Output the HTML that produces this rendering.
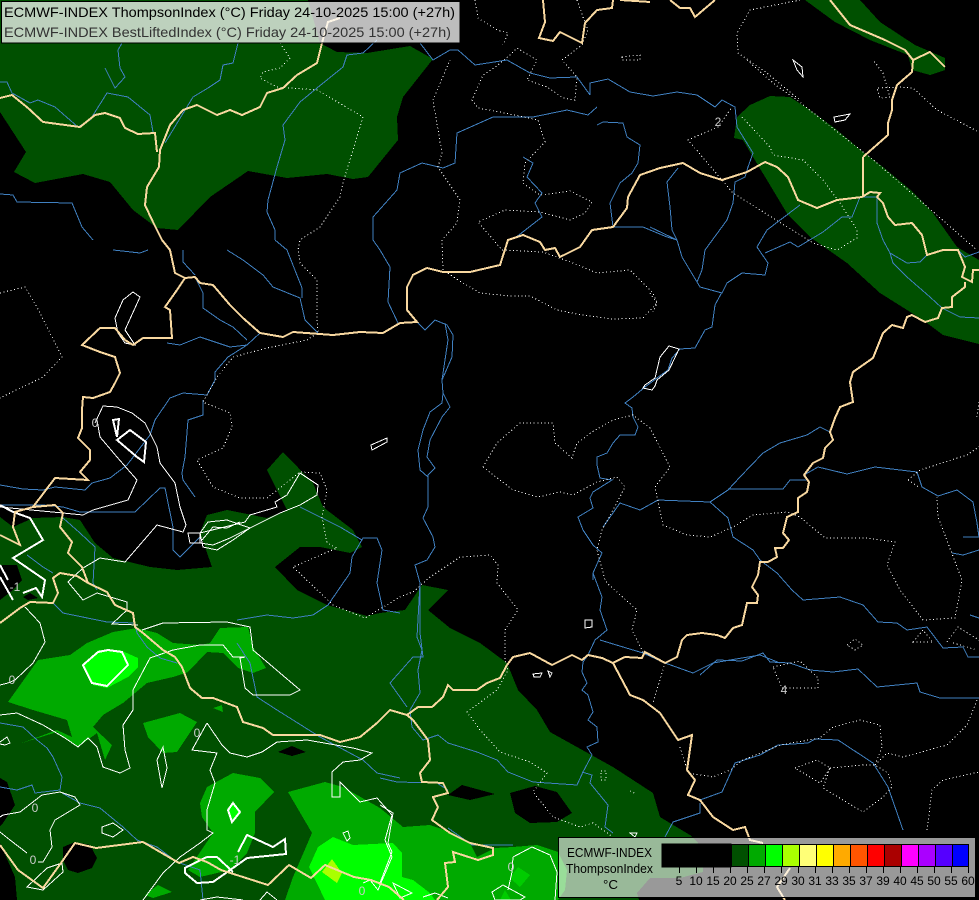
<!DOCTYPE html>
<html lang="en">
<head>
<meta charset="utf-8">
<title>ECMWF-INDEX ThompsonIndex</title>
<style>
html,body{margin:0;padding:0;background:#000;width:979px;height:900px;overflow:hidden}
svg{display:block;position:absolute;left:0;top:0}
text{font-family:"Liberation Sans",sans-serif}
</style>
</head>
<body>
<svg width="979" height="900" viewBox="0 0 979 900" xmlns="http://www.w3.org/2000/svg" shape-rendering="crispEdges">
<rect width="979" height="900" fill="#000"/>

<!-- dark green fills -->
<g fill="#005000">
<polygon points="0,0 308,0 320,43 337,52 367,53 410,46 433,59 403,97 397,117 398,140 368,177 353,179 327,174 287,178 248,171 210,197 178,230 157,228 133,210 110,182 83,174 35,183 14,172 26,152 0,112"/>
<polygon points="734,138 737,117 750,105 770,96 790,97 810,110 837,130 863,152 883,167 913,192 933,213 957,247 979,260 979,344 943,335 923,320 880,293 847,263 810,237 788,215 773,190 753,157 743,140"/>
<polygon points="805,0 860,0 880,22 915,45 945,58 945,70 930,75 912,70 908,55 870,40 835,22"/>
<polygon points="0,517 13,527 33,518 63,517 80,520 95,543 113,558 150,567 177,570 212,567 200,533 207,515 227,510 267,518 287,510 267,470 283,452 313,483 323,507 353,530 362,547 350,553 320,547 300,547 275,567 297,590 327,605 367,616 380,613 405,610 422,585 448,590 428,610 450,628 480,643 507,663 518,690 537,710 550,732 577,747 613,767 653,793 660,817 690,835 698,843 703,863 703,872 680,878 650,878 637,893 639,900 0,900"/>
</g>

<!-- black holes -->
<g fill="#000">
<polygon points="0,565 17,565 22,580 13,590 0,600"/>
<polygon points="23,597 30,593 38,598 28,600"/>
<polygon points="0,778 7,782 15,805 3,823 0,826"/>
<polygon points="0,843 15,877 17,900 0,900"/>
<polygon points="63,847 75,842 90,845 97,858 92,868 78,873 68,870 63,860"/>
<polygon points="278,752 292,746 306,752 292,756"/>
<polygon points="448,795 462,785 495,794 470,800"/>
<polygon points="510,793 535,786 557,792 572,813 557,822 530,823 515,813"/>
</g>

<!-- mid green fills -->
<g fill="#00aa00">
<polygon points="8,702 38,660 70,655 87,643 113,632 137,628 157,633 173,643 200,645 210,643 220,628 248,627 253,647 266,668 253,673 238,668 223,653 207,652 188,672 173,677 147,683 123,703 103,715 93,727 112,745 105,760 97,733 78,747 57,732 22,743 57,730 72,737 67,720 33,710"/>
<polygon points="143,723 180,713 197,722 177,752 163,753 148,737"/>
<polygon points="213,708 222,705 223,712"/>
<polygon points="200,803 207,787 233,773 260,778 274,792 255,812 255,833 247,853 230,870 200,877 188,870 213,833 202,817"/>
<polygon points="145,895 158,885 172,892 153,898"/>
<polygon points="288,792 325,782 343,787 380,808 403,827 430,825 453,833 470,843 477,857 495,848 513,847 537,845 558,852 567,870 565,890 558,900 285,900 293,877 312,833"/>
</g>

<!-- bright fills -->
<g fill="#00ff00">
<polygon points="83,665 98,650 120,650 138,658 138,667 128,677 107,688 93,685"/>
<polygon points="227,810 232,803 240,812 232,822"/>
<polygon points="318,847 333,837 353,845 393,843 402,853 402,877 413,880 430,893 435,900 325,900 309,867"/>
</g>
<g fill="#00cc00">
<polygon points="510,878 518,867 530,875 520,887"/>
<polygon points="500,900 505,890 511,900"/>
</g>
<polygon points="322,872 332,859 342,873 337,883" fill="#aaff00"/>

<!-- rivers -->
<g fill="none" stroke="#4080c0" stroke-width="1">
<polyline points="420,43 433,60 450,50 458,50 475,65 507,60 530,73 550,78 577,77 590,95"/>
<polyline points="590,95 590,83 608,79 630,92 653,96 677,92 697,95 715,107 722,100 735,107 737,127 753,153 748,167 745,177 735,182 733,203 727,220 705,250 702,270 697,282 700,287 722,293 727,283 742,273 765,275 768,263 757,247 767,230 800,205"/>
<polyline points="597,125 603,122 623,123 627,137 640,145 638,163 632,173 620,183 610,203 613,227 643,227 667,237 677,240 682,257 697,282"/>
<polyline points="667,182 678,168 667,182 670,207 672,230 677,240"/>
<polyline points="597,107 588,115 567,110 533,117 493,117 457,133 455,163 443,168 422,163 400,173 397,190 373,217 373,240 380,250 390,267 388,302 398,323"/>
<polyline points="523,157 533,163 527,177 542,193 535,203 542,217 515,238"/>
<polyline points="650,227 677,240"/>
<polyline points="765,253 790,242 798,247 823,232 842,217 852,217 860,197 877,197 877,223 883,240 890,253 907,263 920,262 927,255"/>
<polyline points="890,253 893,263 907,277 930,297 942,308 960,317 979,318"/>
<polyline points="958,250 965,257 979,252"/>
<polyline points="722,292 715,305 712,327 705,330 695,348 680,349 672,358 668,370 657,378 645,387 633,397 625,403 632,408 633,417 638,427 635,435 620,435 613,443 607,453 597,457 597,465 600,478 612,480 593,492 590,498 593,508 578,517 583,530 593,545 602,553 593,573 593,580"/>
<polyline points="603,527 620,503 640,510 658,500 710,502 728,490 740,477 763,453 780,443 807,435 820,427 830,432"/>
<polyline points="728,489 783,489 790,480 807,480"/>
<polyline points="710,502 728,518 733,537 753,550 760,560 777,573 792,590 803,600 840,597 863,605 878,622 897,623 907,630 927,627 943,648 963,647 968,657 979,657"/>
<polyline points="804,475 818,467 847,474 875,467 917,472 922,487 938,496 957,490 973,502 977,523 979,537 963,537"/>
<polyline points="952,553 963,555 979,550"/>
<polyline points="970,615 979,618"/>
<polyline points="700,675 717,660 742,661 763,653 770,662 790,663 810,670 833,672 858,669 877,687 917,683 920,692 940,698 979,698"/>
<polyline points="700,800 722,792 735,763 760,755 778,745 808,743 815,739 838,740 873,763 888,787 903,830"/>
<polyline points="417,322 425,330 435,320 447,325 453,335 452,357 442,380 443,393 450,407 442,417 430,440 427,457 435,468 428,475 428,507 423,518 433,537 435,547 427,560 415,565 420,583 420,633 423,657 413,657 390,683 407,707"/>
<polyline points="445,323 448,340 445,360 442,380 443,393 442,403 430,412 423,430 418,450 420,470 428,477"/>
<polyline points="420,583 417,637 422,650 418,670 420,693 410,710 412,727 423,740 438,735 448,743 477,752 497,760 508,772 533,782 577,785 583,772 592,755 587,747 598,742 597,727 588,720 593,712 588,695 582,690 587,683 582,672 583,662 588,655 595,640 607,630 600,610 602,597 593,573"/>
<polyline points="582,772 592,775 590,783 608,805 605,827 613,833"/>
<polyline points="380,778 397,782 437,783 448,790"/>
<polyline points="448,828 472,845 513,845"/>
<polyline points="600,640 623,647 643,653 665,663 693,673 713,663 730,660 760,655 780,663"/>
<polyline points="700,803 700,813 673,822 665,837"/>
<polyline points="0,485 23,489 43,490 55,487 85,490 92,483 110,478 127,465 150,435 155,420 170,398 183,393 207,395 215,380 215,372 228,357 247,345 260,333"/>
<polyline points="167,343 180,345 200,337 230,347 247,345"/>
<polyline points="203,400 203,415 188,420 185,457 182,473 183,480 195,497"/>
<polyline points="195,277 203,293 203,308 220,320 233,327 247,340"/>
<polyline points="183,250 183,262 195,275"/>
<polyline points="227,250 243,260 263,275 273,287 300,298 305,320 318,333"/>
<polyline points="275,240 287,250 302,288 302,298"/>
<polyline points="113,250 140,253 148,250"/>
<polyline points="0,82 7,82 12,93 30,103 38,100 55,107 78,127 90,120 107,93 128,97 150,115 153,132"/>
<polyline points="105,68 115,88 125,77 120,68 118,50 122,43"/>
<polyline points="165,143 193,97 208,88 220,80 223,65 233,63 238,43"/>
<polyline points="377,40 363,53 347,55 343,67 317,88 300,102 283,125 285,140 277,167 268,200 267,212 275,230 275,240"/>
<polyline points="0,194 13,195 17,202 72,203 82,227 93,240"/>
<polyline points="0,723 23,727 37,740 47,748 53,757 62,777 60,790 35,793 32,785 17,790 0,787"/>
<polyline points="62,793 80,803 100,808 123,827 137,840 157,847 177,862 200,870 203,900"/>
<polyline points="0,505 43,505 63,507 80,512 135,512 160,488 165,488 173,527 173,550 180,557 192,545 200,537"/>
<polyline points="63,518 80,533 95,547 93,583 97,590"/>
<polyline points="27,555 43,567 53,573"/>
<polyline points="53,603 63,613 107,622 135,623 137,633 147,647 160,658 177,663"/>
<polyline points="237,643 250,663 257,697 277,710 293,720 320,737 363,760 377,773 400,778"/>
<polyline points="237,620 267,615 293,618 313,615 328,605 350,573 352,557 363,538 377,538 382,550 377,583 383,610 400,613"/>
<polyline points="300,507 340,527 362,540"/>
</g>

<!-- thin white contours -->
<g fill="none" stroke="#fff" stroke-width="1">
<polyline points="95,423 103,406 117,407 132,413 145,423 157,447 160,463 175,483 180,507 186,525 183,532 157,525 125,562 100,558 83,568 68,582 83,600 97,593 127,602 127,610 112,624 138,625"/>
<polyline points="97,420 100,437 117,457 137,480 128,500 93,510 83,515 63,513 0,507"/>
<polygon points="133,292 140,297 125,330 135,345 125,343 118,333 115,318 123,300"/>
<polygon points="371,445 387,438 387,442 372,450"/>
<polygon points="188,533 200,533 200,543 190,543"/>
<polygon points="200,533 245,522 250,515 277,507 275,502 287,495 300,473 318,485 317,495 300,505 280,513 250,528 233,540 217,550 203,547"/>
<polyline points="200,533 208,522 227,520 250,528 230,538 213,545 200,543"/>
<polyline points="202,540 213,527 227,528 240,522"/>
<polyline points="142,630 163,623 227,622 250,627 253,650 300,690 290,695 253,695 245,688 240,658 245,657 233,657 223,645 200,645 173,650 150,658 133,690 133,710 123,725 125,750 130,768 120,773 103,767 97,747 88,738 78,747 65,738 43,725 17,713 0,715"/>
<polyline points="0,685 8,683 15,680 33,663 45,642 40,623 25,607"/>
<polyline points="207,723 192,750 217,753 210,770 215,783 207,810 207,830 213,833 200,843 180,857 163,873 143,900"/>
<polyline points="207,723 222,745 230,753 247,757 262,752 277,742 307,740 353,748 372,753 360,760 343,762 332,772 332,797 340,797 340,782 360,802 377,798 392,815 385,840 392,857 378,890 370,880 363,883"/>
<polyline points="0,817 3,815 20,812 42,795 60,792 75,797 80,805 55,820 50,830 52,847 43,862 38,862"/>
<polyline points="0,832 10,840 27,853"/>
<polygon points="27,887 47,868 62,863 63,872 43,890"/>
<polygon points="102,827 113,823 123,830 113,837 102,833"/>
<polygon points="163,747 157,760 162,788 167,768"/>
<polyline points="0,742 7,737 10,743 5,745 0,744"/>
<polygon points="343,833 348,831 350,838 347,841"/>
<polyline points="380,805 393,813 388,843 392,852 380,883"/>
<polyline points="513,857 532,847 550,855 557,872 555,900"/>
<polyline points="513,857 512,872 508,890"/>
<polygon points="492,892 503,885 525,897 520,900 495,900"/>
<polygon points="393,883 412,893 400,898"/>
<polyline points="423,897 435,893 448,898"/>
<polyline points="260,900 267,892 277,900"/>
<polyline points="200,900 217,897 243,900"/>
<polygon points="793,60 802,67 803,77 797,70"/>
<polygon points="834,117 850,114 845,120 835,122"/>
<polygon points="669,346 679,349 669,370 657,380 655,386 652,390 643,388 645,385 655,378 660,357"/>
<polygon points="585,620 592,620 592,627 585,628"/>
<polygon points="533,674 542,673 540,677 534,677"/>
<polygon points="548,671 552,673 550,677"/>
<polygon points="630,833 637,833 635,837"/>
</g>

<!-- thick white contours -->
<g fill="none" stroke="#fff" stroke-width="2">
<polyline points="0,505 13,512 30,518 43,540 13,558 45,580 42,597 36,588 23,593"/>
<polyline points="0,565 8,580"/>
<polyline points="0,577 13,600"/>
<polygon points="113,420 119,419 117,437"/>
<polygon points="117,440 130,430 146,442 144,462 137,457"/>
<polygon points="83,665 98,652 108,650 122,652 128,665 107,686 92,683"/>
<polygon points="233,803 240,812 232,822 228,810"/>
<polyline points="238,852 247,835 273,847 285,839 286,854 247,858 233,868 213,882 197,883 185,873 185,868 207,857 217,857 233,872"/>
</g>

<!-- dotted contours -->
<g fill="none" stroke="#fff" stroke-width="1" stroke-dasharray="1 2.6">
<polyline points="280,43 290,58 280,68 263,72 260,78 277,87 317,90 363,117 353,150 343,183 340,197 320,227 300,240 298,250 300,263 317,280 317,317 318,333 307,340 267,348 233,357 217,377 203,402 230,413 232,427 223,448 197,460 213,487 240,498 267,498 300,472 320,473 327,490 322,517 327,543 337,548 293,567 333,605 365,618 400,597 413,592 430,577 460,557 490,555 498,565 497,583 518,610 505,630 505,660 508,670 497,690 467,712 480,730 500,752 530,762 547,773 533,792 553,817 580,827 593,823 613,837"/>
<polyline points="0,293 25,287 37,307 62,357 43,377 0,398"/>
<polyline points="475,0 478,18 497,30 508,33 503,45"/>
<polyline points="577,0 583,17 588,30 582,45 562,60 577,77 575,100 563,98 547,87 527,80 537,60 517,48 510,55 498,65 483,75 472,100 478,108 500,112 538,120 545,142 525,163 523,183 540,195 570,191 592,202 585,213 570,220 540,212 505,210 478,222 502,250 543,252 573,263 597,273 630,270 653,293 657,303 643,318 613,319 577,314 557,310 530,296 510,296 480,293 458,280 443,270 442,240 457,223 460,200 438,167 442,153 433,100 450,60"/>
<polygon points="483,467 497,443 520,423 553,423 555,443 572,458 577,443 592,432 613,420 633,415 650,428 670,467 655,487 663,525 687,535 710,537 733,527 753,515 788,512 800,517 825,538 867,538 895,542 887,565 900,590 923,620 955,618 962,580 938,517 937,497 920,470 908,480 920,488" stroke-opacity="0"/>
<polyline points="483,467 497,443 520,423 553,423 555,443 572,458 577,443 592,432 613,420 633,415 650,428 670,467 655,487 663,525 687,535 710,537 733,527 753,515 788,512 800,517 825,538 867,538 895,542 887,565 900,590 923,620 955,618 962,580 938,517 937,497"/>
<polyline points="483,467 513,490 538,497 560,492 573,495 597,482 617,477 625,487 613,510 602,530 597,550 605,580 607,583 637,610 632,630 643,652 665,663 653,703"/>
<polyline points="680,747 688,773 713,777 730,770 743,760 780,745 820,738 833,727 860,720 880,725 882,747 875,765"/>
<polyline points="908,480 920,470 967,455 979,447"/>
<polyline points="908,480 920,488"/>
<polyline points="979,402 977,417"/>
<polygon points="913,642 923,630 933,642"/>
<polyline points="947,642 958,627 979,640"/>
<polyline points="953,643 977,650"/>
<polygon points="773,667 800,661 818,678 818,688 782,688"/>
<polygon points="847,645 855,639 863,645 855,650"/>
<polyline points="875,765 887,753 903,757 947,745 967,725 977,700"/>
<polygon points="795,768 817,760 830,768 820,783"/>
<polyline points="830,768 863,765 875,765 888,773 892,787 883,797 863,812 823,788 830,768"/>
<polyline points="927,830 932,790 943,780 979,772"/>
<polyline points="747,60 773,83 797,100 863,152 870,157 977,250"/>
<polyline points="977,131 937,110 913,88 900,87 877,88 880,98 890,97 883,73 873,60"/>
<polyline points="742,117 770,147 773,155 803,160 823,180 840,203 857,230 857,238 837,250 813,243 733,193 688,140 718,127 732,107"/>
<polyline points="650,293 657,303 653,312"/>
<polyline points="800,0 750,10 737,33 738,53 763,70 800,100"/>
<polygon points="622,57 640,55 640,60 622,60"/>
<polygon points="601,771 606,771 606,780 601,780"/>
<polyline points="630,791 636,794"/>
</g>

<!-- borders -->
<g fill="none" stroke="#f8d8a0" stroke-width="2">
<polyline points="0,98 12,95 28,108 43,122 80,127 95,115 105,113 120,118 125,128 138,134 155,133 157,152"/>
<polyline points="340,18 328,22 322,43 317,63 297,75 283,88 267,93 260,107 242,115 230,110 217,115 197,105 183,110 170,125 160,150 159,167 147,187 145,205 153,222 162,240 170,250 175,273 185,278 195,277 200,283 213,285 230,305 243,318 260,333 283,337 293,332 333,335 360,332 383,333 400,323 417,322 407,310 407,287 413,275 427,268 443,272 470,272 500,265 508,240 523,235 540,242 545,250 555,248 560,257 580,247 592,230 613,227 627,208 628,197 640,175 660,168 683,163 700,173 722,180 747,172 765,162 777,167 788,177 798,200 817,208 837,200 862,197 870,192 880,193 877,197 883,203 888,217 895,225 912,223 922,235 927,255 943,250 958,250 965,267 962,277 972,282 973,270 979,270"/>
<polyline points="965,282 965,287 952,297 952,307 942,308 938,318 925,322 912,315 907,317 903,328 892,325 883,333 873,358 853,372 850,382 853,402 840,407 835,418 830,432 833,440 825,448 823,458 813,463 804,475 809,482 807,492 798,498 798,512 787,517 783,533 789,540 783,548 775,548 777,557 768,562 760,562 758,575 752,587 758,595 757,603 747,603 742,625 733,628 725,638 717,635 702,633 687,635 682,640 677,657 665,663 645,652 642,658 625,657 613,663 602,658 588,655 582,660 572,655 552,665 530,653 513,657 507,665 500,678 487,683 477,690 453,690 448,685 443,697 432,707 418,707 407,715 390,710 377,723 360,737 340,742 320,735 300,735 273,735 263,728 243,722 237,707 213,698 202,698 190,688 182,667 175,657 163,650 143,633 135,627 133,613 115,605 107,592 88,583 82,567 68,553 72,542 60,527 63,513 55,505 33,507 15,512 13,527 20,545 0,535"/>
<polyline points="863,157 863,197"/>
<polyline points="863,157 888,135 888,123 892,110 892,100 897,85 912,72 913,60 905,50 885,40 850,25 830,0"/>
<polyline points="913,60 930,52 945,67"/>
<polyline points="33,507 55,478 88,480 80,472 90,460 90,450 78,438 82,428 82,410 83,397 93,398 110,392 115,383 120,373 115,357 100,352 82,345 100,328 115,328 125,340 133,345 143,338 172,338 170,310 165,307 177,290 185,278"/>
<polyline points="0,623 20,608 30,602 53,603 58,593 53,578 60,573 77,576 88,583"/>
<polyline points="0,845 18,870 43,888 61,863 75,843 96,848 143,842 179,863 193,857 207,862 221,870 268,885 289,865 311,878 325,865 354,877 371,880 389,887 404,900"/>
<polyline points="407,715 413,720 428,740 430,760 420,773 422,782 443,783 448,793 433,797 438,807 432,820 450,833 470,843 493,848 493,855 478,860 453,852 455,862 445,863 448,887 437,900"/>
<polyline points="543,0 545,22 539,38 553,41 560,32 582,43 585,23 597,10 612,8 613,0"/>
<polyline points="620,0 650,2"/>
<polyline points="670,0 680,8 690,8 695,17 715,0"/>
<polyline points="613,663 630,695 643,700 660,713 670,728 678,740 692,735 687,770 695,780 688,795 700,800 713,817 733,830 745,827 750,840 763,843"/>
<polyline points="790,868 777,887 785,900"/>
</g>

<!-- contour labels -->
<g fill="#ccc" font-size="12" text-anchor="middle">
<text x="718" y="126">2</text>
<text x="784" y="694">4</text>
<text x="12" y="684">0</text>
<text x="197" y="737">0</text>
<text x="35" y="812">0</text>
<text x="33" y="864">0</text>
<text x="95" y="427">0</text>
<text x="511" y="871">0</text>
<text x="362" y="895">0</text>
<text x="235" y="864">-1</text>
<text x="15" y="591">-1</text>
</g>

<!-- title overlay -->
<rect x="1.5" y="1.5" width="458.5" height="41.5" fill="#fff" fill-opacity="0.74" stroke="#000" stroke-width="1"/>
<g shape-rendering="auto">
<text x="4" y="17" font-size="14" fill="#000" textLength="451" lengthAdjust="spacingAndGlyphs">ECMWF-INDEX ThompsonIndex (°C) Friday 24-10-2025 15:00 (+27h)</text>
<text x="4" y="37" font-size="14" fill="#333" textLength="447" lengthAdjust="spacingAndGlyphs">ECMWF-INDEX BestLiftedIndex (°C) Friday 24-10-2025 15:00 (+27h)</text>
</g>

<!-- legend -->
<rect x="558.5" y="837.5" width="417" height="60" fill="#fff" fill-opacity="0.6" stroke="#000" stroke-width="1"/>
<g stroke="#000" stroke-width="1">
<rect x="662" y="844" width="69" height="23" fill="#000"/>
<rect x="731.5" y="844.5" width="17" height="22" fill="#005000"/>
<rect x="748.5" y="844.5" width="17" height="22" fill="#00aa00"/>
<rect x="765.5" y="844.5" width="17" height="22" fill="#00ff00"/>
<rect x="782.5" y="844.5" width="17" height="22" fill="#aaff00"/>
<rect x="799.5" y="844.5" width="17" height="22" fill="#ffff77"/>
<rect x="816.5" y="844.5" width="17" height="22" fill="#ffff00"/>
<rect x="833.5" y="844.5" width="17" height="22" fill="#ffaa00"/>
<rect x="850.5" y="844.5" width="17" height="22" fill="#ff5500"/>
<rect x="867.5" y="844.5" width="17" height="22" fill="#ff0000"/>
<rect x="884.5" y="844.5" width="17" height="22" fill="#aa0000"/>
<rect x="901.5" y="844.5" width="17" height="22" fill="#ff00ff"/>
<rect x="918.5" y="844.5" width="17" height="22" fill="#aa00ff"/>
<rect x="935.5" y="844.5" width="17" height="22" fill="#5500ff"/>
<rect x="952.5" y="844.5" width="16" height="22" fill="#0000ff"/>
<path fill="none" d="M679.5 867V873M696.5 867V873M713.5 867V873M730.5 867V873M747.5 867V873M764.5 867V873M781.5 867V873M798.5 867V873M815.5 867V873M832.5 867V873M849.5 867V873M866.5 867V873M883.5 867V873M900.5 867V873M917.5 867V873M934.5 867V873M951.5 867V873M968.5 867V873"/>
</g>
<g shape-rendering="auto" fill="#000">
<text x="567" y="857" font-size="13" textLength="85" lengthAdjust="spacingAndGlyphs">ECMWF-INDEX</text>
<text x="566" y="873" font-size="13" textLength="87" lengthAdjust="spacingAndGlyphs">ThompsonIndex</text>
<text x="603" y="889" font-size="13" textLength="15" lengthAdjust="spacingAndGlyphs">°C</text>
<g font-size="12" text-anchor="middle">
<text x="679" y="885">5</text>
<text x="696" y="885">10</text>
<text x="713" y="885">15</text>
<text x="730" y="885">20</text>
<text x="747" y="885">25</text>
<text x="764" y="885">27</text>
<text x="781" y="885">29</text>
<text x="798" y="885">30</text>
<text x="815" y="885">31</text>
<text x="832" y="885">33</text>
<text x="849" y="885">35</text>
<text x="866" y="885">37</text>
<text x="883" y="885">39</text>
<text x="900" y="885">40</text>
<text x="917" y="885">45</text>
<text x="934" y="885">50</text>
<text x="951" y="885">55</text>
<text x="968" y="885">60</text>
</g>
</g>
</svg>
</body>
</html>
